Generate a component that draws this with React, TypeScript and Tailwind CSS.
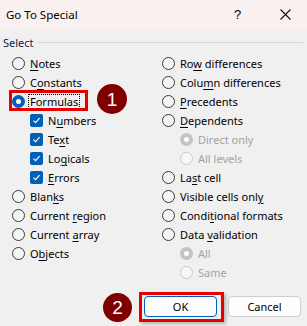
import React from "react";

function Radio({ checked = false, disabled = false }: { checked?: boolean; disabled?: boolean }) {
  if (checked && !disabled) {
    return (
      <span className="w-[13px] h-[13px] rounded-full bg-[#005fb8] flex items-center justify-center shrink-0">
        <span className="w-[5px] h-[5px] rounded-full bg-white" />
      </span>
    );
  }
  if (checked && disabled) {
    return (
      <span className="w-[13px] h-[13px] rounded-full bg-[#c4c4c4] flex items-center justify-center shrink-0">
        <span className="w-[5px] h-[5px] rounded-full bg-white" />
      </span>
    );
  }
  if (disabled) {
    return <span className="w-[13px] h-[13px] rounded-full border border-[#c9c9c9] bg-[#f7f7f7] shrink-0" />;
  }
  return <span className="w-[13px] h-[13px] rounded-full border border-[#3a3a3a] bg-[#f5f5f5] shrink-0" />;
}

function Check() {
  return (
    <span className="w-[13px] h-[13px] rounded-[2px] bg-[#005fb8] flex items-center justify-center shrink-0">
      <svg width="9" height="9" viewBox="0 0 9 9">
        <path d="M1.5 4.6 L3.6 6.6 L7.6 2.2" fill="none" stroke="white" strokeWidth="1.2" />
      </svg>
    </span>
  );
}

function L({ a, k, b, disabled }: { a: string; k?: string; b?: string; disabled?: boolean }) {
  return (
    <span className={disabled ? "text-[#a3a3a3]" : "text-black"}>
      {a}
      {k ? <u className="underline-offset-[2px]">{k}</u> : null}
      {b}
    </span>
  );
}

function Row({ children, indent = false }: { children: React.ReactNode; indent?: boolean }) {
  return (
    <div className={"h-[19px] flex items-center gap-[5px] " + (indent ? "pl-[18px]" : "")}>{children}</div>
  );
}

export default function App() {
  return (
    <div className="relative w-[307px] h-[326px] bg-[#f0f0f0] font-['Noto_Sans',sans-serif] text-[11px] leading-none overflow-hidden select-none">
      {/* Title bar */}
      <div className="h-[29px] bg-[#f9f1ef] flex items-center">
        <span className="pl-[6px] text-[11.5px] text-black flex-1">Go To Special</span>
        <span className="text-[13px] text-black w-[10px] mr-[36px] font-['Liberation_Sans',sans-serif]">?</span>
        <span className="mr-[16px] flex items-center">
          <svg width="11" height="11" viewBox="0 0 11 11">
            <path d="M0.5 0.5 L10.5 10.5 M10.5 0.5 L0.5 10.5" stroke="#111" strokeWidth="1.1" />
          </svg>
        </span>
      </div>

      {/* Body */}
      <div className="pt-[5px]">
        <div className="h-[16px] flex items-center pl-[3px] pr-[4px] gap-[4px]">
          <span className="text-[#1a1a40]">Select</span>
          <div className="flex-1 h-px bg-[#d6d6d6]" />
        </div>

        <div className="flex mt-[4px]">
          <div className="w-[150px] ml-[12px]">
            <Row><Radio /><L a="" k="N" b="otes" /></Row>
            <Row><Radio /><L a="C" k="o" b="nstants" /></Row>
            <Row>
              <Radio checked />
              <span className="border border-dotted border-black px-[1px] py-[1px] -ml-[2px]">
                <L a="" k="F" b="ormulas" />
              </span>
            </Row>
            <Row indent><Check /><L a="N" k="u" b="mbers" /></Row>
            <Row indent><Check /><L a="Te" k="x" b="t" /></Row>
            <Row indent><Check /><L a="Lo" k="g" b="icals" /></Row>
            <Row indent><Check /><L a="" k="E" b="rrors" /></Row>
            <Row><Radio /><L a="Blan" k="k" b="s" /></Row>
            <Row><Radio /><L a="Current " k="r" b="egion" /></Row>
            <Row><Radio /><L a="Current " k="a" b="rray" /></Row>
            <Row><Radio /><L a="O" k="b" b="jects" /></Row>
          </div>
          <div className="flex-1">
            <Row><Radio /><L a="Ro" k="w" b=" differences" /></Row>
            <Row><Radio /><L a="Colu" k="m" b="n differences" /></Row>
            <Row><Radio /><L a="" k="P" b="recedents" /></Row>
            <Row><Radio /><L a="" k="D" b="ependents" /></Row>
            <Row indent><Radio checked disabled /><L a="Direct only" disabled /></Row>
            <Row indent><Radio disabled /><L a="All levels" disabled /></Row>
            <Row><Radio /><L a="La" k="s" b="t cell" /></Row>
            <Row><Radio /><L a="Visible cells onl" k="y" /></Row>
            <Row><Radio /><L a="Condi" k="t" b="ional formats" /></Row>
            <Row><Radio /><L a="Data " k="v" b="alidation" /></Row>
            <Row indent><Radio checked disabled /><L a="All" disabled /></Row>
            <Row indent><Radio disabled /><L a="Same" disabled /></Row>
          </div>
        </div>

        <div className="flex justify-end gap-[11px] pr-[6px] mt-[14px]">
          <button className="w-[73px] h-[21px] rounded-[4px] border border-[#005fb8] bg-[#fdfdfd] text-black text-[11px] flex items-center justify-center">
            OK
          </button>
          <button className="w-[73px] h-[21px] rounded-[4px] border border-[#cfcfcf] bg-[#fdfdfd] text-black text-[11px] flex items-center justify-center">
            Cancel
          </button>
        </div>
      </div>

      {/* Annotations */}
      <div className="absolute left-[9px] top-[90px] w-[79px] h-[21px] border-[3px] border-[#e60000]" />
      <div className="absolute left-[97px] top-[84px] w-[30px] h-[30px] rounded-full bg-[#800000] flex items-center justify-center text-white text-[19px] font-['Liberation_Sans',sans-serif]">
        1
      </div>
      <div className="absolute left-[139px] top-[292px] w-[85px] h-[30px] border-[3px] border-[#e60000] shadow-[2px_2px_3px_rgba(0,0,0,0.25)]" />
      <div className="absolute left-[103px] top-[293px] w-[29px] h-[29px] rounded-full bg-[#800000] flex items-center justify-center text-white text-[19px] font-['Liberation_Sans',sans-serif]">
        2
      </div>
    </div>
  );
}
